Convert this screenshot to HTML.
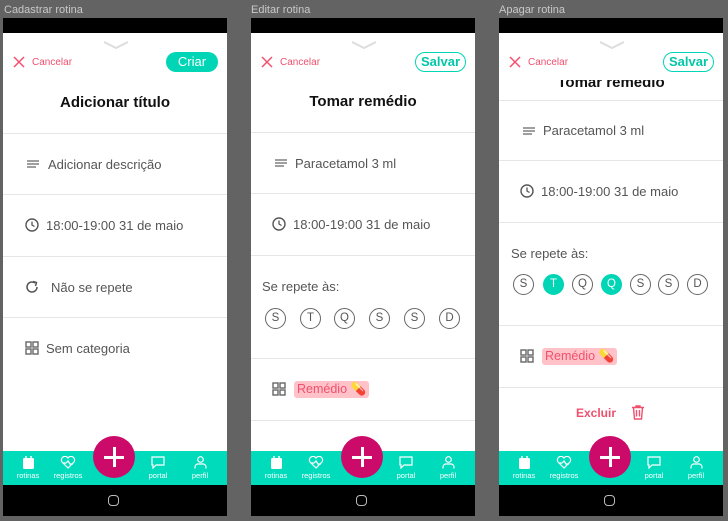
<!DOCTYPE html><html><head><meta charset="utf-8"><style>
*{margin:0;padding:0;box-sizing:border-box}
body{width:728px;height:521px;background:#636363;position:relative;overflow:hidden;font-family:"Liberation Sans",sans-serif}
.lbl{position:absolute;top:4px;font-size:11px;color:#c8c8c8}
.f{position:absolute;top:18px;width:224px;height:498px;background:#fff;overflow:hidden}
.f>*{position:absolute}
.sb{top:0;left:0;width:224px;height:15px;background:#000}
.bot{top:467px;left:0;width:224px;height:31px;background:#000}
.home{top:477px;left:105px;width:11px;height:11px;border:1.5px solid #bbb;border-radius:4px}
.nav{top:433px;left:0;width:224px;height:34px;background:#00dcbb}
.ni{color:#fff;font-size:7.5px;text-align:center;width:50px}
.fab{top:418px;left:90px;width:42px;height:42px;border-radius:50%;background:#cc0a6a}
.fab:before{content:"";position:absolute;left:11px;top:19.5px;width:20px;height:3px;background:#fff}
.fab:after{content:"";position:absolute;left:19.5px;top:11px;width:3px;height:20px;background:#fff}
.hl{left:0;width:224px;height:1px;background:#e6e6e6}
.t{font-size:13px;color:#555}
.title{left:0;width:224px;text-align:center;font-weight:bold;font-size:15px;color:#111}
.cx{font-size:10px;color:#f0506e}
.pill{height:20px;border-radius:10px;font-weight:bold;font-size:13px;text-align:center;line-height:18px}
.c{width:21px;height:21px;border-radius:50%;border:1.3px solid #666;font-size:11.5px;color:#555;text-align:center;line-height:18px}
.c.on{background:#00d6b5;border-color:#00d6b5;color:#fff}
.tag{background:#ffc2c8;color:#f0506e;font-size:12.5px;border-radius:3px;padding:1px 3px;line-height:15px}
.hdr{top:15px;left:0;width:224px;height:47px;background:#fff}
</style></head><body>
<div class="lbl" style="left:4px">Cadastrar rotina</div>
<div class="lbl" style="left:251px">Editar rotina</div>
<div class="lbl" style="left:499px">Apagar rotina</div>

<div class="f" style="left:3px">
<div class="sb"></div>
<svg style="left:100px;top:23px" width="26" height="8"><path d="M1 1L13 7L25 1" stroke="#ddd" stroke-width="2" fill="none"/></svg>
<svg style="left:10px;top:38px" width="12" height="12"><path d="M1 1L11 11M11 1L1 11" stroke="#f0506e" stroke-width="1.5"/></svg>
<div class="cx" style="left:29px;top:39px">Cancelar</div>
<div class="pill" style="left:163px;top:34px;width:52px;background:#00d6b5;color:#fff;font-weight:normal;line-height:20px">Criar</div>
<div class="title" style="top:76px">Adicionar título</div>
<div class="hl" style="top:115px"></div>
<svg style="left:24px;top:142px" width="12" height="8"><path d="M0 1H12M0 4H12M0 7H9" stroke="#666" stroke-width="1.3"/></svg>
<div class="t" style="left:45px;top:139px">Adicionar descrição</div>
<div class="hl" style="top:176px"></div>
<svg style="left:22px;top:200px" width="14" height="14"><circle cx="7" cy="7" r="6" stroke="#555" stroke-width="1.4" fill="none"/><path d="M7 3.5V7L9.5 8.5" stroke="#555" stroke-width="1.3" fill="none"/></svg>
<div class="t" style="left:43px;top:200px">18:00-19:00 31 de maio</div>
<div class="hl" style="top:238px"></div>
<svg style="left:22px;top:262px" width="14" height="14"><path d="M12 7A5 5 0 1 1 10 3" stroke="#555" stroke-width="1.5" fill="none"/><path d="M8 1.5L11.5 2.5L10.5 6" stroke="#555" stroke-width="1.5" fill="none"/></svg>
<div class="t" style="left:48px;top:262px">Não se repete</div>
<div class="hl" style="top:299px"></div>
<svg style="left:22px;top:323px" width="14" height="14"><g stroke="#666" stroke-width="1.4" fill="none"><rect x="1" y="1" width="5" height="5"/><rect x="8" y="1" width="5" height="5"/><rect x="1" y="8" width="5" height="5"/><rect x="8" y="8" width="5" height="5"/></g></svg>
<div class="t" style="left:43px;top:323px">Sem categoria</div>
<div class="nav"></div>
<div class="ni" style="left:0;top:438px"><svg width="13" height="13"><rect x="1" y="2" width="11" height="11" rx="1.5" fill="#fff"/><path d="M4 0V3M9 0V3" stroke="#fff" stroke-width="1.5"/></svg><br>rotinas</div>
<div class="ni" style="left:40px;top:438px"><svg width="16" height="13"><path d="M8 12L2 6A3 3 0 0 1 8 2A3 3 0 0 1 14 6Z M3 7H6L8 5L10 8H13" stroke="#fff" stroke-width="1.2" fill="none"/></svg><br>registros</div>
<div class="ni" style="left:130px;top:438px"><svg width="14" height="13"><path d="M1 1H13V9H5L2 12V9H1Z" stroke="#fff" stroke-width="1.2" fill="none"/></svg><br>portal</div>
<div class="ni" style="left:172px;top:438px"><svg width="13" height="13"><circle cx="6.5" cy="3.5" r="2.8" stroke="#fff" stroke-width="1.2" fill="none"/><path d="M1 12.5V11A3 3 0 0 1 4 8H9A3 3 0 0 1 12 11V12.5" stroke="#fff" stroke-width="1.2" fill="none"/></svg><br>perfil</div>
<div class="fab"></div>
<div class="bot"></div><div class="home"></div>
</div>

<div class="f" style="left:251px">
<div class="sb"></div>
<svg style="left:100px;top:23px" width="26" height="8"><path d="M1 1L13 7L25 1" stroke="#ddd" stroke-width="2" fill="none"/></svg>
<svg style="left:10px;top:38px" width="12" height="12"><path d="M1 1L11 11M11 1L1 11" stroke="#f0506e" stroke-width="1.5"/></svg>
<div class="cx" style="left:29px;top:39px">Cancelar</div>
<div class="pill" style="left:164px;top:34px;width:51px;border:1.5px solid #00d6b5;color:#00c7a8">Salvar</div>
<div class="title" style="top:75px">Tomar remédio</div>
<div class="hl" style="top:114px"></div>
<svg style="left:24px;top:141px" width="12" height="8"><path d="M0 1H12M0 4H12M0 7H9" stroke="#666" stroke-width="1.3"/></svg>
<div class="t" style="left:44px;top:138px">Paracetamol 3 ml</div>
<div class="hl" style="top:175px"></div>
<svg style="left:21px;top:199px" width="14" height="14"><circle cx="7" cy="7" r="6" stroke="#555" stroke-width="1.4" fill="none"/><path d="M7 3.5V7L9.5 8.5" stroke="#555" stroke-width="1.3" fill="none"/></svg>
<div class="t" style="left:42px;top:199px">18:00-19:00 31 de maio</div>
<div class="hl" style="top:237px"></div>
<div class="t" style="left:11px;top:261px">Se repete às:</div>
<div class="c" style="left:14px;top:290px">S</div>
<div class="c" style="left:49px;top:290px">T</div>
<div class="c" style="left:83px;top:290px">Q</div>
<div class="c" style="left:118px;top:290px">S</div>
<div class="c" style="left:153px;top:290px">S</div>
<div class="c" style="left:188px;top:290px">D</div>
<div class="hl" style="top:340px"></div>
<svg style="left:21px;top:364px" width="14" height="14"><g stroke="#666" stroke-width="1.4" fill="none"><rect x="1" y="1" width="5" height="5"/><rect x="8" y="1" width="5" height="5"/><rect x="1" y="8" width="5" height="5"/><rect x="8" y="8" width="5" height="5"/></g></svg>
<div class="tag" style="left:43px;top:363px">Remédio 💊</div>
<div class="hl" style="top:402px"></div>
<div class="nav"></div>
<div class="ni" style="left:0;top:438px"><svg width="13" height="13"><rect x="1" y="2" width="11" height="11" rx="1.5" fill="#fff"/><path d="M4 0V3M9 0V3" stroke="#fff" stroke-width="1.5"/></svg><br>rotinas</div>
<div class="ni" style="left:40px;top:438px"><svg width="16" height="13"><path d="M8 12L2 6A3 3 0 0 1 8 2A3 3 0 0 1 14 6Z M3 7H6L8 5L10 8H13" stroke="#fff" stroke-width="1.2" fill="none"/></svg><br>registros</div>
<div class="ni" style="left:130px;top:438px"><svg width="14" height="13"><path d="M1 1H13V9H5L2 12V9H1Z" stroke="#fff" stroke-width="1.2" fill="none"/></svg><br>portal</div>
<div class="ni" style="left:172px;top:438px"><svg width="13" height="13"><circle cx="6.5" cy="3.5" r="2.8" stroke="#fff" stroke-width="1.2" fill="none"/><path d="M1 12.5V11A3 3 0 0 1 4 8H9A3 3 0 0 1 12 11V12.5" stroke="#fff" stroke-width="1.2" fill="none"/></svg><br>perfil</div>
<div class="fab"></div>
<div class="bot"></div><div class="home"></div>
</div>

<div class="f" style="left:499px">
<div class="sb"></div>
<div class="title" style="top:56px">Tomar remédio</div>
<div class="hdr"></div>
<svg style="left:100px;top:23px" width="26" height="8"><path d="M1 1L13 7L25 1" stroke="#ddd" stroke-width="2" fill="none"/></svg>
<svg style="left:10px;top:38px" width="12" height="12"><path d="M1 1L11 11M11 1L1 11" stroke="#f0506e" stroke-width="1.5"/></svg>
<div class="cx" style="left:29px;top:39px">Cancelar</div>
<div class="pill" style="left:164px;top:34px;width:51px;border:1.5px solid #00d6b5;color:#00c7a8">Salvar</div>
<div class="hl" style="top:82px"></div>
<svg style="left:24px;top:109px" width="12" height="8"><path d="M0 1H12M0 4H12M0 7H9" stroke="#666" stroke-width="1.3"/></svg>
<div class="t" style="left:44px;top:105px">Paracetamol 3 ml</div>
<div class="hl" style="top:142px"></div>
<svg style="left:21px;top:166px" width="14" height="14"><circle cx="7" cy="7" r="6" stroke="#555" stroke-width="1.4" fill="none"/><path d="M7 3.5V7L9.5 8.5" stroke="#555" stroke-width="1.3" fill="none"/></svg>
<div class="t" style="left:42px;top:166px">18:00-19:00 31 de maio</div>
<div class="hl" style="top:204px"></div>
<div class="t" style="left:12px;top:228px">Se repete às:</div>
<div class="c" style="left:14px;top:256px">S</div>
<div class="c on" style="left:44px;top:256px">T</div>
<div class="c" style="left:73px;top:256px">Q</div>
<div class="c on" style="left:102px;top:256px">Q</div>
<div class="c" style="left:131px;top:256px">S</div>
<div class="c" style="left:159px;top:256px">S</div>
<div class="c" style="left:188px;top:256px">D</div>
<div class="hl" style="top:307px"></div>
<svg style="left:21px;top:331px" width="14" height="14"><g stroke="#666" stroke-width="1.4" fill="none"><rect x="1" y="1" width="5" height="5"/><rect x="8" y="1" width="5" height="5"/><rect x="1" y="8" width="5" height="5"/><rect x="8" y="8" width="5" height="5"/></g></svg>
<div class="tag" style="left:43px;top:330px">Remédio 💊</div>
<div class="hl" style="top:369px"></div>
<div style="left:77px;top:388px;font-weight:bold;font-size:12px;color:#f0506e">Excluir</div>
<svg style="left:132px;top:387px" width="14" height="15"><path d="M1 2.5H13M5 2.5V1H9V2.5M2.5 2.5L3.5 14H10.5L11.5 2.5M5.5 5V11.5M8.5 5V11.5" stroke="#f0506e" stroke-width="1.4" fill="none"/></svg>
<div class="nav"></div>
<div class="ni" style="left:0;top:438px"><svg width="13" height="13"><rect x="1" y="2" width="11" height="11" rx="1.5" fill="#fff"/><path d="M4 0V3M9 0V3" stroke="#fff" stroke-width="1.5"/></svg><br>rotinas</div>
<div class="ni" style="left:40px;top:438px"><svg width="16" height="13"><path d="M8 12L2 6A3 3 0 0 1 8 2A3 3 0 0 1 14 6Z M3 7H6L8 5L10 8H13" stroke="#fff" stroke-width="1.2" fill="none"/></svg><br>registros</div>
<div class="ni" style="left:130px;top:438px"><svg width="14" height="13"><path d="M1 1H13V9H5L2 12V9H1Z" stroke="#fff" stroke-width="1.2" fill="none"/></svg><br>portal</div>
<div class="ni" style="left:172px;top:438px"><svg width="13" height="13"><circle cx="6.5" cy="3.5" r="2.8" stroke="#fff" stroke-width="1.2" fill="none"/><path d="M1 12.5V11A3 3 0 0 1 4 8H9A3 3 0 0 1 12 11V12.5" stroke="#fff" stroke-width="1.2" fill="none"/></svg><br>perfil</div>
<div class="fab"></div>
<div class="bot"></div><div class="home"></div>
</div>
</body></html>
